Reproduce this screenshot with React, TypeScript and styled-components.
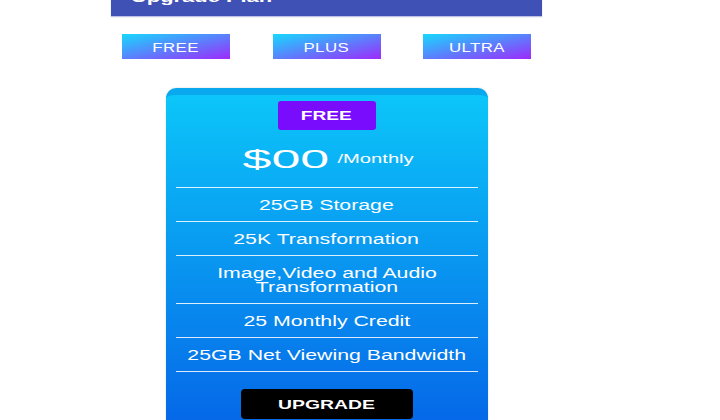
import React from 'react';
import styled, { createGlobalStyle } from 'styled-components';

const GlobalStyle = createGlobalStyle`
  html, body { margin: 0; padding: 0; background: #ffffff; }
  body { font-family: "Liberation Sans", Arial, sans-serif; overflow: hidden; }
  * { box-sizing: border-box; }
`;

const Page = styled.div`
  width: 431px;
  margin-left: 111px;
  display: flex;
  flex-direction: column;
`;

const Header = styled.header`
  height: 40px;
  margin-top: -24px;
  background: #3f51b5;
  display: flex;
  align-items: flex-end;
  padding: 0 0 10px 20px;
  box-shadow: 0 1px 1px rgba(63, 81, 181, 0.35);
`;

const Title = styled.h1`
  margin: 0;
  font-size: 15px;
  line-height: 18px;
  font-weight: 700;
  color: #ffffff;
  white-space: nowrap;
  transform: scaleX(1.46);
  transform-origin: left center;
`;

const Tabs = styled.nav`
  display: flex;
  justify-content: space-between;
  padding: 0 11px;
  margin-top: 18px;
`;

const Tab = styled.button`
  width: 108px;
  height: 25px;
  margin: 0;
  padding: 2px 0 0;
  border: 0;
  background: linear-gradient(to bottom right, #16d9fe, #9e2afb);
  color: #ffffff;
  font-family: inherit;
  font-size: 12px;
  line-height: 14px;
  display: flex;
  align-items: center;
  justify-content: center;
  cursor: pointer;
`;

const TabLabel = styled.span`
  display: inline-block;
  letter-spacing: 0.3px;
  transform: scaleX(1.4);
`;

const Card = styled.section`
  width: 322px;
  margin: 29px auto 0;
  border-top: 7px solid #0aa8ee;
  border-radius: 10px 10px 0 0;
  background: linear-gradient(180deg, #0cc6f9 0%, #0563e7 100%);
  padding: 6px 10px 20px;
  display: flex;
  flex-direction: column;
  box-shadow: 0 0 2px rgba(0, 0, 0, 0.18);
`;

const Badge = styled.div`
  align-self: center;
  width: 98px;
  height: 29px;
  background: #7a0cfe;
  border-radius: 3px;
  display: flex;
  align-items: center;
  justify-content: center;
  color: #ffffff;
  font-size: 13px;
  font-weight: 700;
`;

const BadgeLabel = styled.span`
  display: inline-block;
  transform: scaleX(1.47);
`;

const PriceRow = styled.div`
  height: 57px;
  padding: 14px 0 13px 12px;
  text-align: center;
  white-space: nowrap;
  color: #ffffff;
  font-size: 25px;
  line-height: 30px;
`;

const Amount = styled.span`
  display: inline-block;
  font-size: 25px;
  line-height: 30px;
  transform: scaleX(2.08);
`;

const Period = styled.span`
  display: inline-block;
  margin-left: 45px;
  font-size: 13px;
  line-height: 13px;
  vertical-align: 5px;
  transform: scaleX(1.55);
`;

const Features = styled.ul`
  list-style: none;
  margin: 0;
  padding: 0;
  border-bottom: 1px solid rgba(255, 255, 255, 0.85);
`;

const Feature = styled.li`
  border-top: 1px solid rgba(255, 255, 255, 0.85);
  padding: 9.5px 0;
  text-align: center;
  color: #ffffff;
  font-size: 14px;
  line-height: 14px;
`;

const FeatureText = styled.span`
  display: inline-block;
  max-width: 198px;
  transform: scaleX(1.52);
`;

const UpgradeButton = styled.button`
  align-self: center;
  margin-top: 17px;
  width: 172px;
  height: 30px;
  padding: 0;
  border: 0;
  border-radius: 4px;
  background: #000000;
  color: #ffffff;
  font-family: inherit;
  font-size: 13px;
  font-weight: 700;
  display: flex;
  align-items: center;
  justify-content: center;
  cursor: pointer;
`;

const ButtonLabel = styled.span`
  display: inline-block;
  transform: scaleX(1.49);
`;

const plans = ['FREE', 'PLUS', 'ULTRA'];
const features = [
  '25GB Storage',
  '25K Transformation',
  'Image,Video and Audio Transformation',
  '25 Monthly Credit',
  '25GB Net Viewing Bandwidth',
];

export default function App() {
  return (
    <>
      <GlobalStyle />
      <Page>
        <Header>
          <Title>Upgrade Plan</Title>
        </Header>
        <Tabs>
          {plans.map((p) => (
            <Tab key={p}>
              <TabLabel>{p}</TabLabel>
            </Tab>
          ))}
        </Tabs>
        <Card>
          <Badge>
            <BadgeLabel>FREE</BadgeLabel>
          </Badge>
          <PriceRow>
            <Amount>$00</Amount>
            <Period>/Monthly</Period>
          </PriceRow>
          <Features>
            {features.map((f) => (
              <Feature key={f}>
                <FeatureText>{f}</FeatureText>
              </Feature>
            ))}
          </Features>
          <UpgradeButton>
            <ButtonLabel>UPGRADE</ButtonLabel>
          </UpgradeButton>
        </Card>
      </Page>
    </>
  );
}
